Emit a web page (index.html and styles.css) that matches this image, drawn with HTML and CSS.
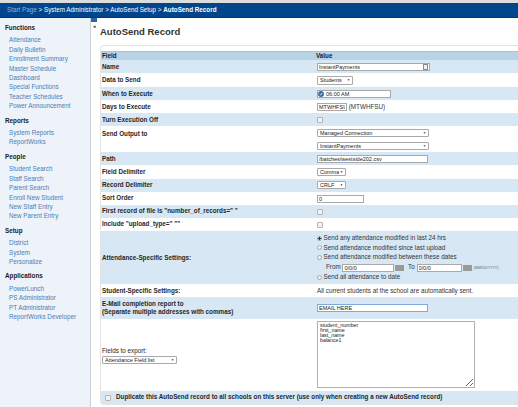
FILE: index.html
```html
<!DOCTYPE html>
<html lang="en">
<head>
    <meta charset="UTF-8">
    <title>AutoSend Record</title>
    <link rel="stylesheet" href="styles.css">
</head>
<body>
    <div class="topline"></div>
    <div class="crumbs">
        <a href="#" class="start">Start Page</a> &gt; System Administrator &gt; AutoSend Setup &gt; <b>AutoSend Record</b>
    </div>
    <div class="layout">
        <nav class="sidebar">
            <h3>Functions</h3>
            <ul>
                <li><a href="#">Attendance</a></li>
                <li><a href="#">Daily Bulletin</a></li>
                <li><a href="#">Enrollment Summary</a></li>
                <li><a href="#">Master Schedule</a></li>
                <li><a href="#">Dashboard</a></li>
                <li><a href="#">Special Functions</a></li>
                <li><a href="#">Teacher Schedules</a></li>
                <li><a href="#">Power Announcement</a></li>
            </ul>
            <h3>Reports</h3>
            <ul>
                <li><a href="#">System Reports</a></li>
                <li><a href="#">ReportWorks</a></li>
            </ul>
            <h3>People</h3>
            <ul>
                <li><a href="#">Student Search</a></li>
                <li><a href="#">Staff Search</a></li>
                <li><a href="#">Parent Search</a></li>
                <li><a href="#">Enroll New Student</a></li>
                <li><a href="#">New Staff Entry</a></li>
                <li><a href="#">New Parent Entry</a></li>
            </ul>
            <h3>Setup</h3>
            <ul>
                <li><a href="#">District</a></li>
                <li><a href="#">System</a></li>
                <li><a href="#">Personalize</a></li>
            </ul>
            <h3>Applications</h3>
            <ul>
                <li><a href="#">PowerLunch</a></li>
                <li><a href="#">PS Administrator</a></li>
                <li><a href="#">PT Administrator</a></li>
                <li><a href="#">ReportWorks Developer</a></li>
            </ul>
        </nav>
        <div class="tabcol">
            <div class="toggle">&#9666;</div>
        </div>
        <main class="main">
            <h1>AutoSend Record</h1>
            <div class="box">
                <table class="record">
                    <thead>
                        <tr><th class="col-field">Field</th><th>Value</th></tr>
                    </thead>
                    <tbody>
                        <tr>
                            <td class="label">Name</td>
                            <td><span class="wrap"><input class="txt w-name" type="text" value="InstantPayments"><span class="keyicon"></span></span></td>
                        </tr>
                        <tr>
                            <td class="label">Data to Send</td>
                            <td><span class="sel"><select class="w-students"><option>Students</option></select></span></td>
                        </tr>
                        <tr>
                            <td class="label">When to Execute</td>
                            <td><span class="wrap"><svg class="clock" width="6" height="6" viewBox="0 0 6 6"><circle cx="3" cy="3" r="2.7" fill="#2f6db5" stroke="#1c4c86" stroke-width="0.5"/><polyline points="1.6,3.1 2.6,4 4.4,1.9" fill="none" stroke="#fff" stroke-width="0.8"/></svg><input class="txt w-when" type="text" value="06:00 AM"></span></td>
                        </tr>
                        <tr>
                            <td class="label">Days to Execute</td>
                            <td><input class="txt w-days" type="text" value="MTWHFSU"> <span class="note">(MTWHFSU)</span></td>
                        </tr>
                        <tr>
                            <td class="label">Turn Execution Off</td>
                            <td><input type="checkbox"></td>
                        </tr>
                        <tr>
                            <td class="label top">Send Output to</td>
                            <td>
                                <div class="stack">
                                    <span class="sel"><select class="w-wide"><option>Managed Connection</option></select></span>
                                    <span class="sel"><select class="w-wide"><option>InstantPayments</option></select></span>
                                </div>
                            </td>
                        </tr>
                        <tr>
                            <td class="label">Path</td>
                            <td><input class="txt w-path" type="text" value="/batches/westside202.csv"></td>
                        </tr>
                        <tr>
                            <td class="label">Field Delimiter</td>
                            <td><span class="sel"><select class="w-small"><option>Comma</option></select></span></td>
                        </tr>
                        <tr>
                            <td class="label">Record Delimiter</td>
                            <td><span class="sel"><select class="w-small"><option>CRLF</option></select></span></td>
                        </tr>
                        <tr>
                            <td class="label">Sort Order</td>
                            <td><input class="txt w-sort" type="text" value="0"></td>
                        </tr>
                        <tr>
                            <td class="label">First record of file is "number_of_records=" "</td>
                            <td><input type="checkbox"></td>
                        </tr>
                        <tr>
                            <td class="label">Include "upload_type=" ""</td>
                            <td><input type="checkbox"></td>
                        </tr>
                        <tr>
                            <td class="label">Attendance-Specific Settings:</td>
                            <td>
                                <div class="opts">
                                    <label><input type="radio" name="att" checked>Send any attendance modified in last 24 hrs</label>
                                    <label><input type="radio" name="att">Send attendance modified since last upload</label>
                                    <label><input type="radio" name="att">Send attendance modified between these dates</label>
                                    <div class="dates">
                                        From <input class="txt w-from" type="text" value="0/0/0"><span class="cal"></span> To <input class="txt w-to" type="text" value="0/0/0"><span class="cal"></span><span class="fmt">(MM/DD/YYYY)</span>
                                    </div>
                                    <label><input type="radio" name="att">Send all attendance to date</label>
                                </div>
                            </td>
                        </tr>
                        <tr>
                            <td class="label">Student-Specific Settings:</td>
                            <td class="note">All current students at the school are automatically sent.</td>
                        </tr>
                        <tr>
                            <td class="label two">E-Mail completion report to<br>(Separate multiple addresses with commas)</td>
                            <td><input class="txt w-email focus" type="text" value="EMAIL HERE"></td>
                        </tr>
                        <tr>
                            <td class="export">
                                Fields to export:<br>
                                <span class="sel"><select class="w-list"><option>Attendance Field list</option></select></span>
                            </td>
                            <td><textarea class="fields">student_number
first_name
last_name
balance1</textarea></td>
                        </tr>
                        <tr>
                            <td class="label dup" colspan="2"><input type="checkbox">Duplicate this AutoSend record to all schools on this server (use only when creating a new AutoSend record)</td>
                        </tr>
                    </tbody>
                </table>
            </div>
        </main>
    </div>
</body>
</html>
```

FILE: styles.css
```css
/* General */
html, body {
    margin: 0;
    padding: 0;
    overflow: hidden;
    background: #fff;
}

body {
    font-family: "Liberation Sans", Arial, sans-serif;
    font-size: 6.3px;
    color: #222;
}

.topline {
    height: 3px;
    background: #dddddd;
}

.crumbs {
    height: 14px;
    line-height: 14px;
    padding-left: 7px;
    background: #01468d;
    border-bottom: 1px solid #0b3466;
    color: #fff;
    white-space: nowrap;
}

.crumbs .start {
    color: #8db0da;
    text-decoration: none;
}

.layout {
    display: flex;
    height: calc(100vh - 18px);
}

/* Sidebar */
.sidebar {
    flex: none;
    width: 90px;
    padding-top: 5px;
    background: #eef3f9;
    border-right: 1px solid #c8d1db;
}

.sidebar h3 {
    margin: 0 0 3px;
    padding-left: 5px;
    font-size: 6.3px;
    line-height: 9.4px;
    color: #222;
}

.sidebar ul {
    list-style: none;
    margin: 0 0 5px;
    padding-left: 9px;
}

.sidebar li {
    line-height: 9.4px;
    white-space: nowrap;
}

.sidebar a {
    color: #4a7db5;
    text-decoration: none;
}

.tabcol {
    flex: none;
    width: 6px;
}

.toggle {
    height: 9px;
    border-top: 4px solid #2e64a2;
    font-size: 5px;
    line-height: 9px;
    text-align: center;
    color: #333;
}

/* Content */
.main {
    flex: none;
    width: 460px;
    padding-left: 3px;
}

.main h1 {
    margin: 8px 0 8px;
    font-size: 9.5px;
    line-height: 11px;
    color: #333;
}

.box {
    width: 440px;
    padding-top: 5px;
    border: 1px solid #e3e3e3;
    border-radius: 4px;
}

.record {
    width: 100%;
    border-collapse: collapse;
}

.record th {
    padding: 0 1px;
    line-height: 8px;
    text-align: left;
    background: #b8d2e6;
    border-top: 1px solid #a7c3d9;
    color: #1c1c1c;
}

.record .col-field {
    width: 212px;
}

.record td {
    padding: 2.45px 2px;
    line-height: 8px;
    vertical-align: middle;
}

.record tbody tr:nth-child(odd) {
    background: #d7e8f4;
}

.record .label {
    font-weight: bold;
    color: #262626;
    padding-left: 1px;
}

.record .label.top {
    vertical-align: top;
    padding-top: 4px;
}

.record .label.two {
    line-height: 8.5px;
}

.record .export {
    padding-left: 1px;
    line-height: 9px;
    color: #262626;
}

.note {
    color: #333;
}

/* Form controls */
.txt {
    box-sizing: border-box;
    height: 8px;
    margin: 0;
    padding: 0 1px;
    border: 1px solid #a9a9a9;
    font-family: inherit;
    font-size: 5.5px;
    color: #222;
    background: #fff;
    vertical-align: middle;
}

.txt.focus {
    border-color: #7fa9dc;
}

.w-name { width: 113px; padding-right: 8px; }
.w-when { width: 74px; padding-left: 8px; }
.w-days { width: 30px; }
.w-path { width: 111px; }
.w-sort { width: 47px; }
.w-email { width: 111px; }
.w-from { width: 52px; }
.w-to { width: 45px; }

.wrap {
    position: relative;
    display: inline-block;
    vertical-align: middle;
    line-height: 0;
}

.keyicon {
    position: absolute;
    right: 2px;
    top: 1.5px;
    width: 3px;
    height: 4px;
    border: 1px solid #8a8a8a;
    background: #f2f2f2;
}

.clock {
    position: absolute;
    left: 1px;
    top: 1px;
}

.sel {
    position: relative;
    display: inline-block;
    vertical-align: middle;
    line-height: 0;
}

.sel select {
    -webkit-appearance: none;
    appearance: none;
    box-sizing: border-box;
    height: 8px;
    margin: 0;
    padding: 0 6px 0 2px;
    border: 1px solid #a9a9a9;
    border-radius: 1px;
    background: #fff;
    font-family: inherit;
    font-size: 5.5px;
    line-height: 6px;
    color: #222;
}

.sel::after {
    content: "\25BC";
    position: absolute;
    right: 3px;
    top: 0;
    font-size: 3px;
    line-height: 8px;
    color: #222;
    pointer-events: none;
}

.w-students { width: 36px; height: 9px !important; }
.w-wide { width: 112px; }
.w-small { width: 29px; }
.w-list { width: 75px; }

.stack {
    display: flex;
    flex-direction: column;
    gap: 5px;
    align-items: flex-start;
}

input[type="checkbox"] {
    -webkit-appearance: none;
    appearance: none;
    box-sizing: border-box;
    width: 6px;
    height: 6px;
    margin: 0;
    border: 1px solid #b3b3b3;
    border-radius: 1px;
    background: #f3f3f3;
    vertical-align: middle;
}

.dup input[type="checkbox"] {
    margin: 0 5px 0 3px;
}

.opts label {
    display: block;
    line-height: 9.4px;
    color: #333;
    font-weight: normal;
}

input[type="radio"] {
    -webkit-appearance: none;
    appearance: none;
    box-sizing: border-box;
    width: 5px;
    height: 5px;
    margin: 0 1.5px 0 0;
    border: 1px solid #a8a8a8;
    border-radius: 50%;
    background: #f2f2f2;
    vertical-align: -0.5px;
}

input[type="radio"]:checked {
    background: radial-gradient(circle, #333 0 1px, #f2f2f2 1.2px);
}

.dates {
    height: 11px;
    line-height: 11px;
    padding-left: 9px;
    color: #333;
    white-space: nowrap;
}

.cal {
    display: inline-block;
    width: 9px;
    height: 6px;
    margin: 0 2px 0 1px;
    background: #9a9a9a;
    vertical-align: middle;
}

.fmt {
    font-size: 3.6px;
    color: #666;
}

.fields {
    box-sizing: border-box;
    width: 158px;
    height: 67px;
    margin: 0;
    padding: 1px 2px;
    border: 1px solid #b0b0b0;
    font-family: inherit;
    font-size: 5.3px;
    line-height: 5px;
    color: #222;
    vertical-align: middle;
}
```
